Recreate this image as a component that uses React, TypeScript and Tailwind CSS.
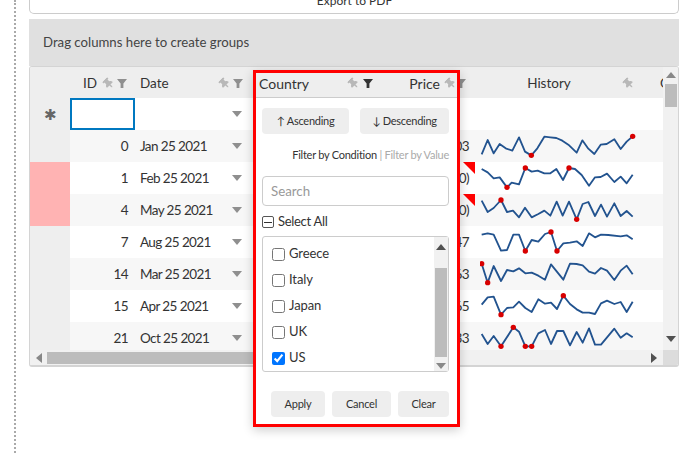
import React from "react";
import { FaThumbtack } from "react-icons/fa";

const Pin = ({ dark }: { dark?: boolean }) => (
    <FaThumbtack className={`h-[11px] w-[11px] rotate-[-45deg] ${dark ? "text-[#777]" : "text-[#b8b8b8]"}`} />
);

const Funnel = ({ dark }: { dark?: boolean }) => (
    <svg viewBox="0 0 10 9" className={`h-[9px] w-[10px] ${dark ? "text-[#333]" : "text-[#8f8f8f]"}`}>
        <path d="M0 0h10L6.4 4.6V9H3.6V4.6z" fill="currentColor" />
    </svg>
);

const Caret = ({ className = "" }: { className?: string }) => (
    <svg viewBox="0 0 10 6" className={`h-[6px] w-[10px] ${className}`}>
        <path d="M0 0h10L5 6z" fill="currentColor" />
    </svg>
);

const rows = [
    {
        id: 0, date: "Jan 25 2021", price: "1,203", bad: false, top: 210,
        line: "80,283 98,240 116,280 134,252 152,265 172,272 192,232 210,275 229,286 247,265 268,230 286,232 304,234 322,242 340,254 365,278 382,241 400,266 418,282 437,254 455,252 478,238 497,267 515,245 533,229",
        dots: [[229, 286], [533, 229]],
    },
    {
        id: 1, date: "Feb 25 2021", price: "(1,500)", bad: true, top: 306,
        line: "80,327 98,337 116,355 134,352 156,382 170,368 192,373 211,324 230,335 248,332 268,340 286,340 304,327 324,360 342,324 360,327 380,345 402,377 420,352 437,351 456,341 478,366 497,350 515,370 533,344",
        dots: [[156, 382], [211, 324], [342, 324]],
    },
    {
        id: 4, date: "May 25 2021", price: "(2,100)", bad: true, top: 402,
        line: "80,422 98,456 116,444 138,420 156,456 174,452 192,472 210,443 230,472 250,462 268,452 286,467 305,425 323,467 342,425 365,478 383,432 400,426 420,468 438,434 456,470 478,430 497,468 515,453 533,470",
        dots: [[138, 420], [365, 478]],
    },
    {
        id: 7, date: "Aug 25 2021", price: "3,347", bad: false, top: 18,
        line: "80,44 98,40 116,44 138,92 156,90 175,44 192,44 211,93 230,60 250,65 270,42 288,36 306,93 325,70 345,68 365,64 383,78 402,40 420,52 438,44 460,45 497,49 515,46 533,58",
        dots: [[211, 93], [288, 36], [306, 93]],
    },
    {
        id: 14, date: "Mar 25 2021", price: "1,463", bad: false, top: 114,
        line: "80,131 98,188 116,138 138,183 156,150 175,154 192,145 211,160 230,158 250,167 270,179 288,133 325,179 345,131 365,132 383,136 402,155 420,161 438,144 456,152 478,180 497,152 515,137 533,163",
        dots: [[80, 131], [98, 188]],
    },
    {
        id: 15, date: "Apr 25 2021", price: "2,165", bad: false, top: 210,
        line: "80,254 98,232 116,230 138,284 156,264 175,262 192,245 211,264 230,276 250,238 270,251 288,248 306,267 325,227 345,252 365,268 383,278 402,278 420,282 438,250 456,242 478,252 497,246 515,276 533,245",
        dots: [[138, 284], [325, 227]],
    },
    {
        id: 21, date: "Oct 25 2021", price: "1,633", bad: false, top: 306,
        line: "80,342 98,372 116,348 138,379 175,322 192,335 211,379 230,379 250,340 270,330 288,372 306,333 325,333 345,376 365,336 383,368 402,325 420,374 438,374 478,326 497,353 515,340 533,352",
        dots: [[138, 379], [175, 322], [211, 379], [230, 379]],
    },
];

const Spark = ({ line, dots, top }: { line: string; dots: number[][]; top: number }) => (
    <svg width="156" height="32" viewBox={`75 ${top} 468 96`} className="block">
        <polyline points={line} fill="none" stroke="#22538f" strokeWidth="5.5" strokeLinejoin="round" />
        {dots.map(([x, y]) => (
            <circle key={x} cx={x} cy={y} r="8" fill="#d80000" />
        ))}
    </svg>
);

const PopupButton = ({ label, className }: { label: string; className: string }) => (
    <button className={`flex h-[26px] items-center justify-center whitespace-nowrap rounded-[4px] bg-[#eeeeee] pt-[1px] text-[11px] tracking-[-0.25px] text-[#333] ${className}`}>
        {label}
    </button>
);

export default function App() {
    return (
        <div
            className="h-[453px] w-[690px] overflow-hidden bg-white pl-[14px] text-[13.5px] text-[#333]"
            style={{ fontFamily: 'Lato, sans-serif' }}
        >
            <div className="h-full border-l-2 border-dotted border-[#aaaaaa] pl-[13px]">
                {/* export button, cut by the top of the page */}
                <div className="flex h-[14px] w-[650px] items-end justify-center overflow-hidden rounded-b-[5px] border border-t-0 border-[#cccccc] pb-[6px] pl-[1px] text-[12px] leading-none">
                    <span>Export to PDF</span>
                </div>

                {/* group panel */}
                <div className="mt-[5px] flex h-[47px] w-[650px] items-center bg-[#e0e0e0] pl-[14px] text-[13.2px] text-[#444]">
                    Drag columns here to create groups
                </div>

                {/* grid */}
                <div className="relative w-[650px]">
                    <div className="overflow-hidden rounded-b-[3px] rounded-t-[3px] border-x border-b-2 border-t border-[#d4d4d4]">
                        <div className="flex">
                            <div className="h-[283px] w-[633px] overflow-hidden">
                                {/* header */}
                                <div className="flex h-[31px] bg-[#eeeeee] pt-[1px] text-[13.5px]">
                                    <div className="w-[40px] shrink-0" />
                                    <div className="flex w-[65px] shrink-0 items-center pl-[13px]">
                                        <span>ID</span>
                                        <span className="ml-[6px] flex items-center gap-[3px]">
                                            <Pin />
                                            <Funnel />
                                        </span>
                                    </div>
                                    <div className="flex w-[115px] shrink-0 items-center justify-between pl-[5px] pr-[7px]">
                                        <span>Date</span>
                                        <span className="flex items-center gap-[3px]">
                                            <Pin />
                                            <Funnel />
                                        </span>
                                    </div>
                                    <div className="w-[115px] shrink-0" />
                                    <div className="flex w-[110px] shrink-0 items-center justify-end pr-[9px]">
                                        <Funnel />
                                    </div>
                                    <div className="flex w-[180px] shrink-0 items-center pr-[21px]">
                                        <span className="flex-1 text-center">History</span>
                                        <Pin />
                                    </div>
                                    <div className="flex shrink-0 items-center pl-[5px]">Color</div>
                                </div>

                                {/* new row */}
                                <div className="flex h-[32px]">
                                    <div className="flex w-[40px] shrink-0 items-center justify-center bg-[#eeeeee] text-[15px] leading-none text-[#666]">
                                        ✱
                                    </div>
                                    <div className="w-[65px] shrink-0 border-2 border-[#0078c0]" />
                                    <div className="flex w-[115px] shrink-0 items-center justify-end pr-[8px] text-[#8f8f8f]">
                                        <Caret />
                                    </div>
                                </div>

                                {rows.map((row, i) => (
                                    <div key={row.id} className={`flex h-[32px] shrink-0 tracking-[-0.6px] ${i % 2 === 0 ? "bg-[#f7f7f7]" : "bg-white"}`}>
                                        <div className={`w-[40px] shrink-0 ${row.bad ? "bg-[#ffb3b3]" : "bg-[#eeeeee]"}`} />
                                        <div className="flex w-[65px] shrink-0 items-center justify-end pr-[7px]">{row.id}</div>
                                        <div className="flex w-[115px] shrink-0 items-center justify-between pl-[5px] pr-[8px]">
                                            <span>{row.date}</span>
                                            <Caret className="text-[#8f8f8f]" />
                                        </div>
                                        <div className="w-[115px] shrink-0" />
                                        <div className="relative flex w-[110px] shrink-0 items-center justify-end pr-[6px]">
                                            {row.price}
                                            {row.bad && (
                                                <span className="absolute right-0 top-0 h-0 w-0 border-l-[12px] border-t-[12px] border-l-transparent border-t-[#ff0000]" />
                                            )}
                                        </div>
                                        <div className="w-[180px] shrink-0 pl-[5px]">
                                            <Spark line={row.line} dots={row.dots} top={row.top} />
                                        </div>
                                    </div>
                                ))}
                            </div>

                            {/* vertical scrollbar */}
                            <div className="flex h-[283px] w-[15px] flex-col items-center bg-[#f1f1f1] pt-[5px]">
                                <Caret className="h-[4px] w-[8px] rotate-180 text-[#888]" />
                                <div className="mt-[6px] h-[23px] w-[12px] bg-[#bcbcbc]" />
                                <div className="flex-1" />
                                <Caret className="mb-[8px] h-[4px] w-[8px] text-[#505050]" />
                            </div>
                        </div>

                        {/* horizontal scrollbar */}
                        <div className="flex h-[15px] items-center bg-[#f1f1f1]">
                            <Caret className="ml-[4px] h-[4px] w-[8px] rotate-90 text-[#888]" />
                            <div className="ml-[3px] h-[12px] w-[210px] bg-[#bcbcbc]" />
                            <div className="flex-1" />
                            <Caret className="mr-[4px] h-[4px] w-[8px] -rotate-90 text-[#505050]" />
                            <div className="h-full w-[15px] bg-[#dcdcdc]" />
                        </div>
                    </div>

                    {/* filter popup */}
                    <div className="absolute left-[224px] top-[4px] flex h-[357px] w-[207px] flex-col border-[3px] border-[#ff0000] bg-white shadow-[0_3px_10px_rgba(0,0,0,0.2)]">
                        <div className="flex h-[25px] shrink-0 items-center border-b border-[#cccccc] bg-[#eeeeee] pb-[3px] pl-[3px] text-[14px]">
                            <span>Country</span>
                            <span className="ml-auto flex items-center gap-[4px]">
                                <Pin />
                                <Funnel dark />
                            </span>
                            <span className="ml-[36px]">Price</span>
                            <span className="ml-[5px] mr-[1px]">
                                <Pin />
                            </span>
                        </div>

                        <div className="flex flex-1 flex-col pl-[6px] pr-[8px]">
                            <div className="mt-[10px] flex justify-between">
                                <PopupButton label="↑ Ascending" className="w-[87px]" />
                                <PopupButton label="↓ Descending" className="w-[89px]" />
                            </div>
                            <div className="mt-[11px] whitespace-nowrap text-right text-[11px] leading-[20px] tracking-[-0.25px]">
                                <span>Filter by Condition</span>
                                <span className="text-[#aaa]"> | Filter by Value</span>
                            </div>
                            <div className="mt-[11px] flex h-[30px] items-center rounded-[4px] border border-[#cccccc] pl-[8px] pt-[1px] text-[13.3px] text-[#999]">
                                Search
                            </div>
                            <div className="mt-[8px] flex h-[16px] items-center gap-[4px] text-[13px] tracking-[-0.3px]">
                                <span className="flex h-[12px] w-[12px] items-center justify-center rounded-[2px] border border-[#555]">
                                    <span className="h-px w-[8px] bg-[#333]" />
                                </span>
                                Select All
                            </div>
                            <div className="mt-[6px] flex h-[136px] rounded-[3px] border border-[#cccccc]">
                                <div className="flex flex-1 flex-col pl-[9px] pt-[4px] text-[13px] tracking-[-0.1px]">
                                    {["Greece", "Italy", "Japan", "UK", "US"].map((c) => (
                                        <label key={c} className="flex h-[26.3px] items-center gap-[4px]">
                                            <input type="checkbox" defaultChecked={c === "US"} className="m-0 h-[13px] w-[13px]" />
                                            {c}
                                        </label>
                                    ))}
                                </div>
                                <div className="flex w-[14px] flex-col items-center bg-[#f1f1f1] pt-[7px]">
                                    <Caret className="h-[4px] w-[7px] rotate-180 text-[#505050]" />
                                    <div className="mt-[18px] h-[89px] w-[12px] bg-[#bcbcbc]" />
                                    <Caret className="mt-[6px] h-[4px] w-[7px] text-[#888]" />
                                </div>
                            </div>
                            <div className="mt-[19px] flex pl-[9px]">
                                <PopupButton label="Apply" className="w-[54px]" />
                                <PopupButton label="Cancel" className="ml-[7px] w-[59px]" />
                                <PopupButton label="Clear" className="ml-[7px] w-[51px]" />
                            </div>
                        </div>
                    </div>
                </div>
            </div>
        </div>
    );
}
